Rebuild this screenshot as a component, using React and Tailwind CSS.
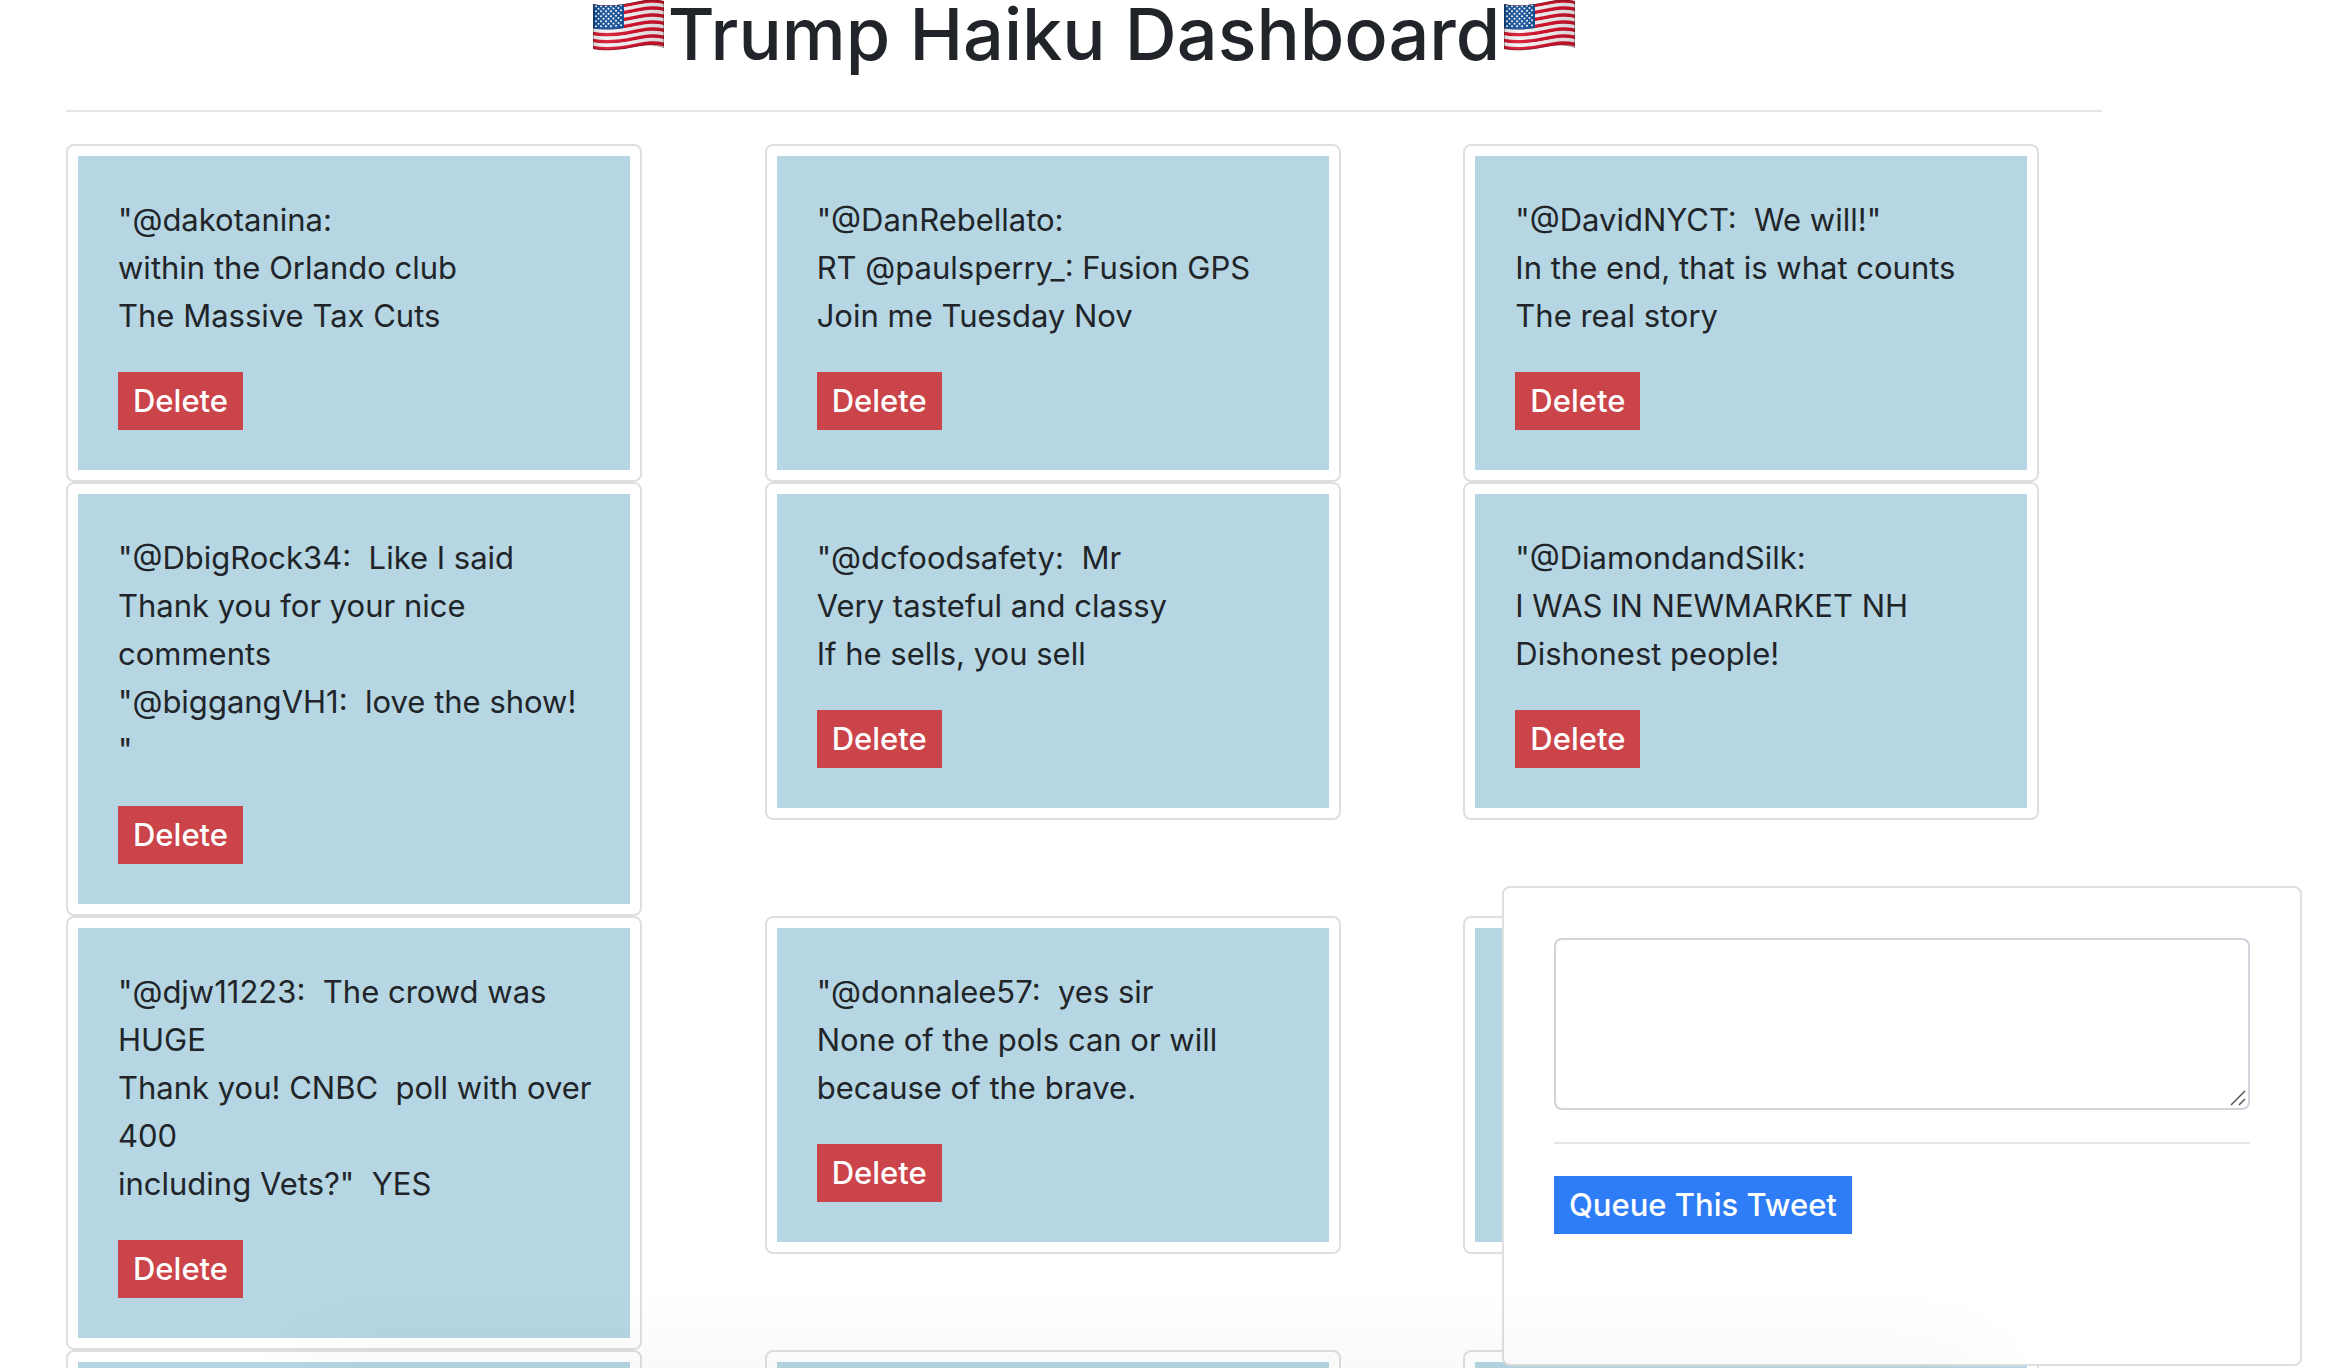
import React from "react";

const haikus = [
  ['"@dakotanina:', "within the Orlando club", "The Massive Tax Cuts"],
  ['"@DanRebellato:', "RT @paulsperry_: Fusion GPS", "Join me Tuesday Nov"],
  ['"@DavidNYCT:  We will!"', "In the end, that is what counts", "The real story"],
  ['"@DbigRock34:  Like I said', "Thank you for your nice", "comments", '"@biggangVH1:  love the show!', '"'],
  ['"@dcfoodsafety:  Mr', "Very tasteful and classy", "If he sells, you sell"],
  ['"@DiamondandSilk:', "I WAS IN NEWMARKET NH", "Dishonest people!"],
  ['"@djw11223:  The crowd was', "HUGE", "Thank you! CNBC  poll with over", "400", 'including Vets?"  YES'],
  ['"@donnalee57:  yes sir', "None of the pols can or will", "because of the brave."],
  [],
  [],
  [],
  [],
];

const WAVE_TOP = "M-1 4 C14 7 28 5 42 2 S62 -1 72 1";
const OUTLINE = "M0 4 C14 7 28 5 42 2 S62 -1 71 1 V48 C60 44 52 45 42 47 S14 52 0 49Z";
const stripes = Array.from({ length: 13 }, (_, i) => i);

function Flag({ id }) {
  const stars = [];
  for (let r = 0; r < 9; r++) {
    for (let c = 0; c < (r % 2 ? 5 : 6); c++) {
      const x = 3 + c * 5 + (r % 2 ? 2.5 : 0);
      stars.push([x, 6 + r * 2.5 + Math.sin(x / 10) * 0.8 - x / 30]);
    }
  }
  return (
    <svg viewBox="0 0 71 51" className="h-[51px] w-[71px] shrink-0" role="img" aria-label="US flag">
      <defs>
        <clipPath id={`${id}c`}>
          <path d={OUTLINE} />
        </clipPath>
        <linearGradient id={`${id}g`} x1="0" x2="1" y1="0" y2="0">
          <stop offset="0" stopColor="#000" stopOpacity=".12" />
          <stop offset=".2" stopColor="#fff" stopOpacity=".1" />
          <stop offset=".6" stopColor="#000" stopOpacity=".06" />
          <stop offset="1" stopColor="#000" stopOpacity=".14" />
        </linearGradient>
      </defs>
      <g clipPath={`url(#${id}c)`}>
        <rect width="71" height="51" fill="#f7f5f5" />
        {stripes.map((i) => (
          <path
            key={i}
            d={WAVE_TOP}
            transform={`translate(0 ${i * 3.5 + 1.5})`}
            fill="none"
            stroke={i % 2 ? "#f7f5f5" : "#d5142e"}
            strokeWidth="3.6"
          />
        ))}
        <path d="M0 0H31V28C20 30 10 30 0 28.5Z" fill="#0d4c96" />
        {stars.map(([x, y], i) => (
          <circle key={i} cx={x} cy={y} r="1" fill="#fff" />
        ))}
        <rect width="71" height="51" fill={`url(#${id}g)`} />
        <path d={OUTLINE} fill="none" stroke="#3a1a1a" strokeOpacity=".45" strokeWidth="1.6" />
      </g>
    </svg>
  );
}

function HaikuCard({ lines }) {
  return (
    <article className="w-full max-w-[576px] rounded-lg border-2 border-[#dfdfdf] bg-white p-2.5">
      <div className="min-h-[314px] bg-[#b5d6e2] p-10">
        {lines.length > 0 && (
          <>
            <p className="mb-8 text-[31px] leading-[48px] whitespace-pre">{lines.join("\n")}</p>
            <button type="button" className="block h-[58px] bg-[#cb444a] px-[15px] text-[31px] leading-[48px] font-medium text-white">
              Delete
            </button>
          </>
        )}
      </div>
    </article>
  );
}

export default function App() {
  return (
    <div className="h-screen overflow-hidden bg-white font-['Inter',sans-serif] text-[#212529]">
      <main className="pr-[228px] pl-[66px]">
        <header className="flex h-28 items-start justify-center border-b-2 border-[#e5e5e5]">
          <Flag id="l" />
          <h1 className="px-1 text-[72px] leading-[68px] font-medium whitespace-nowrap">Trump Haiku Dashboard</h1>
          <Flag id="r" />
        </header>
        <section className="-mr-[60px] grid grid-cols-3 items-start pt-8">
          {haikus.map((lines, i) => (
            <HaikuCard key={i} lines={lines} />
          ))}
        </section>
      </main>

      <form className="fixed right-7 bottom-0.5 h-[480px] w-[800px] rounded-lg border-2 border-[#dfdfdf] bg-white p-[50px]">
        <div className="relative">
          <textarea aria-label="Tweet" className="block h-[172px] w-full resize-none rounded-lg border-2 border-[#ced4da] bg-white px-6 py-3 text-[31px] leading-[48px] outline-none" />
          <svg viewBox="0 0 16 16" className="pointer-events-none absolute right-1 bottom-1 size-4" fill="none" stroke="#555" strokeWidth="1.5">
            <path d="M1 15 15 1M9 15l6-6" />
          </svg>
        </div>
        <hr className="my-8 border-t-2 border-[#e5e5e5]" />
        <button type="button" className="block h-[58px] bg-[#2e7df6] px-[15px] text-[31px] leading-[48px] font-medium text-white">
          Queue This Tweet
        </button>
      </form>

      <div className="pointer-events-none fixed right-[15%] -bottom-[60px] left-[13%] h-[60px] shadow-[0_0_100px_rgba(0,0,0,0.06)]" />
    </div>
  );
}
